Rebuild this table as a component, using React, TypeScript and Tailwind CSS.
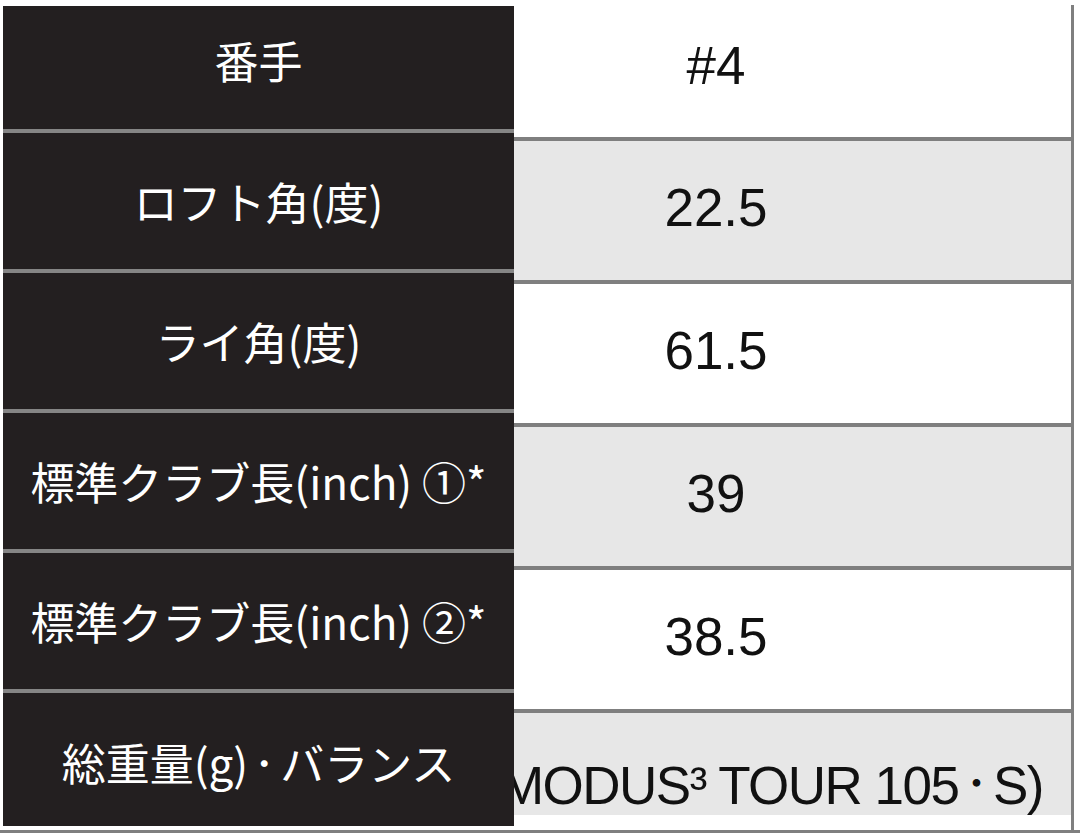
const labels = [
  '番手',
  'ロフト角(度)',
  'ライ角(度)',
  '標準クラブ長(inch) ①*',
  '標準クラブ長(inch) ②*',
  '総重量(g)・バランス',
];

const values = ['#4', '22.5', '61.5', '39', '38.5'];

const jp = { fontFamily: '"Noto Sans CJK JP", "Noto Sans", sans-serif' };
const latin = { fontFamily: '"Liberation Sans", "Noto Sans CJK JP", sans-serif' };

// the source uses a narrow middle dot: set it smaller and lift it
function withDot(text: string, dotClass: string) {
  const parts = text.split('・');
  if (parts.length === 1) return text;
  return (
    <>
      {parts[0]}
      <span className={dotClass}>・</span>
      {parts[1]}
    </>
  );
}

export default function App() {
  return (
    <div className="w-[1080px] h-[833px] bg-white flex flex-col overflow-hidden">
      <div className="flex h-[830px]">
        {/* Label column */}
        <div className="ml-[3px] mt-[6px] w-[511px] h-[820px] bg-[#231f20] flex flex-col" style={jp}>
          {labels.map((label, i) => (
            <div key={label} className="flex flex-col">
              {i > 0 && <div className="h-[4px] bg-[#858585]" />}
              <div
                className={
                  'flex items-center justify-center text-[44px] leading-none text-white whitespace-nowrap ' +
                  (i === 0 ? 'h-[123px] pb-[16px]' : i === 5 ? 'h-[133px] pt-[4px]' : 'h-[136px]')
                }
              >
                <span>{withDot(label, 'text-[32px] align-[5px]')}</span>
              </div>
            </div>
          ))}
        </div>

        {/* Value column */}
        <div className="w-[557px] flex flex-col" style={latin}>
          {values.map((v, i) => (
            <div key={v} className="flex flex-col">
              {i > 0 && <div className="h-[4px] bg-[#7f7f7f]" />}
              <div
                className={
                  'flex items-center justify-center pr-[153px] pb-[7px] text-[53px] leading-none text-[#111] ' +
                  (i === 0 ? 'h-[137px] bg-white' : 'h-[139px] ' + (i % 2 === 1 ? 'bg-[#e7e7e7]' : 'bg-white'))
                }
              >
                {v}
              </div>
            </div>
          ))}
          <div className="h-[4px] bg-[#7f7f7f]" />
          <div className="h-[102px] bg-[#e7e7e7] flex items-end justify-end overflow-hidden pr-[28px] pb-[3px]">
            <span className="text-[53px] leading-none text-[#111] whitespace-nowrap tracking-[-1.5px]">
              {withDot('MODUS³ TOUR 105・S)', 'text-[36px] align-[7px]')}
            </span>
          </div>
        </div>

        <div className="w-[3px] mt-[5px] bg-[#7f7f7f]" />
      </div>
      <div className="h-[3px] bg-[#7f7f7f]" />
    </div>
  );
}
